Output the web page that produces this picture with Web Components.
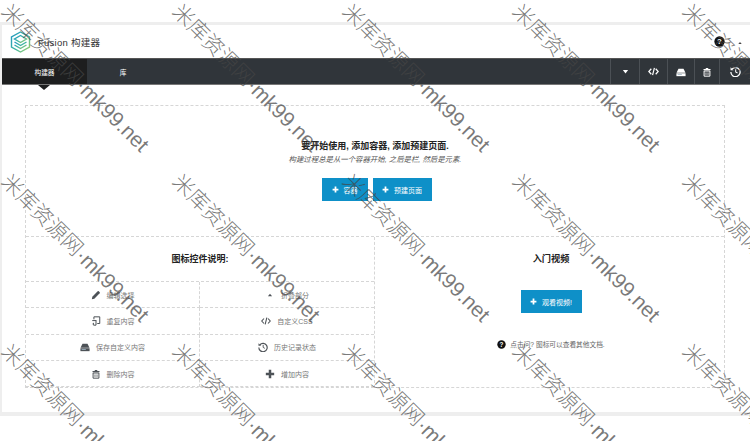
<!DOCTYPE html>
<html lang="zh"><head><meta charset="utf-8"><title>Fusion 构建器</title>
<style>
html,body{margin:0;padding:0;background:#fff;overflow:hidden}
body{width:750px;height:441px;position:relative;font-family:"Liberation Sans","Noto Sans CJK SC",sans-serif}
</style></head><body>
<fb-app>
  <fb-header></fb-header>
  <fb-toolbar></fb-toolbar>
  <fb-canvas>
    <fb-intro></fb-intro>
    <fb-panels>
      <fb-legend></fb-legend>
      <fb-video></fb-video>
    </fb-panels>
  </fb-canvas>
</fb-app>
<fb-watermark></fb-watermark>
<script>
const ICONS={
 plus:'<path d="M6 1v10M1 6h10" stroke="currentColor" stroke-width="3" fill="none"/>',
 pencil:'<path d="M1 11l.6-3L8 1.6a1 1 0 0 1 1.4 0l1 1a1 1 0 0 1 0 1.4L4 10.4z" fill="currentColor"/>',
 copy:'<path d="M3.5 1h7v8h-3M3.5 1v3" stroke="currentColor" stroke-width="1.2" fill="none"/><path d="M1.5 5.5h5M6 5.5v5.5H3" stroke="currentColor" stroke-width="1.2" fill="none"/><path d="M1.5 9.5l2-1.6v3.2z" fill="currentColor"/>',
 hdd:'<path d="M3 2h6l2.4 5H.6z" fill="currentColor"/><path d="M.5 7.5h11V11H.5z" fill="currentColor"/><path d="M2 9h5" stroke="#9fb4c4" stroke-width="1"/>',
 code:'<path d="M3.6 3 .9 6l2.7 3M8.4 3l2.7 3-2.7 3M7 2 5 10" stroke="currentColor" stroke-width="1.3" fill="none"/>',
 up:'<path d="M6 4.500l2.500 3H3.500z" fill="currentColor"/>',
 down:'<path d="M6 8.500 2.500 4h7z" fill="currentColor"/>',
 history:'<path d="M2.300 3.300A5 5 0 1 1 1 6.500" stroke="currentColor" stroke-width="1.400" fill="none"/><path d="M.6 1.400v3.200h3.200z" fill="currentColor"/><path d="M6.200 3.500v3l2 1.100" stroke="currentColor" stroke-width="1.100" fill="none"/>',
 trash:'<path d="M4.500 1.200h3V2.500h2.700V4H1.800V2.500h2.700z" fill="currentColor"/><path d="M2.500 4.800h7V11h-7z" stroke="currentColor" stroke-width="1.200" fill="none"/><path d="M4.500 6.500v3M6 6.500v3M7.500 6.500v3" stroke="currentColor" stroke-width=".7"/>',
 help:'<circle cx="6" cy="6" r="5.600" fill="currentColor"/><text x="6" y="9" text-anchor="middle" font-size="8.500" font-weight="700" font-family="Liberation Sans" fill="#fff">?</text>'
};
const svg=(n,s=12)=>`<svg width="${s}" height="${s}" viewBox="0 0 12 12" aria-hidden="true">${ICONS[n]}</svg>`;
const FONT='"Liberation Sans","Noto Sans CJK SC",sans-serif';
const DASH='1px dashed #d6d6d6';
function def(name,html){
  customElements.define(name,class extends HTMLElement{
    constructor(){super();const r=this.attachShadow({mode:'open'});r.innerHTML=typeof html==='function'?html(this):html;}
  });
}
def('fb-app',`<style>:host{display:block;box-sizing:border-box;margin-top:22px;height:394px;background:#fff;border:solid #eeeeee;border-width:3px 0 4px 2px;font-family:${FONT}}</style><slot></slot>`);
def('fb-header',`<style>:host{display:flex;align-items:center;height:33px;box-sizing:border-box;padding:0 4px 0 8px;color:#333}
.logo{margin-right:7px;display:block}.t{font-size:9.500px;letter-spacing:.25px;flex:1;padding-top:1px}
.h{color:#111;display:flex;margin-right:21px}.c{position:absolute;left:736px;top:39px;color:#444;display:flex}</style>
<svg class="logo" width="21" height="22" viewBox="0 0 21 22" aria-hidden="true"><defs><linearGradient id="g" x1="0" y1="0" x2="1" y2="1"><stop offset="0" stop-color="#1f97c4"/><stop offset=".55" stop-color="#3fb5a0"/><stop offset="1" stop-color="#a5d268"/></linearGradient></defs><g fill="none" stroke="url(#g)" stroke-width="1.400"><path d="M10.500 1 19.500 6v10l-9 5-9-5V6z"/><path d="M10.500 4.500 16.500 8l-6 3.500L4.500 8z"/><path d="M4.500 11l6 3.500 6-3.500M4.500 14l6 3.500 6-3.500"/></g></svg>
<span class="t">Fusion 构建器</span><span class="h">${svg('help',11)}</span><span class="c">${svg('up',8)}</span>`);
def('fb-toolbar',`<style>:host{display:flex;height:27px;background:#30353a;border-top:1px solid #555;border-bottom:1px solid #777;box-sizing:border-box;color:#fff;position:relative;font-size:6.700px}
.tab{display:flex;align-items:center;justify-content:center;height:100%;position:relative}
.a{width:85px;background:#1d1e1f}.b{width:72px}
.a::after{content:"";position:absolute;left:36px;top:100%;border:6px solid transparent;border-top:5px solid #1d1e1f;border-bottom:0;margin-top:1px}
.sp{flex:1}.i{display:flex;align-items:center;justify-content:center;border-left:1px solid #4b5055;height:100%;box-sizing:border-box}</style>
<div class="tab a">构建器</div><div class="tab b">库</div><div class="sp"></div>
<div class="i" style="width:29px">${svg('down',9)}</div><div class="i" style="width:28px">${svg('code',11)}</div><div class="i" style="width:27px">${svg('hdd',10)}</div><div class="i" style="width:25px">${svg('trash',10)}</div><div class="i" style="width:31px">${svg('history',11)}</div>`);
def('fb-canvas',`<style>:host{display:block;box-sizing:border-box;margin:20px 25px 0 23px;height:283px;border:${DASH}}</style><slot></slot>`);
def('fb-intro',`<style>:host{display:flex;flex-direction:column;align-items:center;height:130px;box-sizing:border-box;padding-top:34px;text-align:center}
h2{margin:0;font-size:9px;line-height:13px;font-weight:700;color:#222}
p{margin:1px 0 0;font-size:7.400px;line-height:11px;font-style:italic;color:#555}
.r{display:flex;gap:5px;margin:13px 0 0 3px}</style>
<h2>要开始使用, 添加容器, 添加预建页面.</h2><p>构建过程总是从一个容器开始, 之后是栏, 然后是元素.</p>
<div class="r"><fb-button w="46">容器</fb-button><fb-button w="59">预建页面</fb-button></div>`);
def('fb-button',h=>`<style>:host{display:inline-flex;align-items:center;justify-content:center;gap:5px;height:23px;width:${h.getAttribute('w')}px;background:#0e90c8;color:#fff;font-size:7px;box-sizing:border-box}</style>${svg('plus',7)}<slot></slot>`);
def('fb-panels',`<style>:host{display:grid;grid-template-columns:349px 1fr;height:151px;border-top:${DASH}}</style><slot></slot>`);
def('fb-legend',`<style>:host{display:block;border-right:${DASH}}
h3{margin:0;height:44px;line-height:44px;text-align:center;font-size:9px;color:#222;font-weight:700}
.g{display:grid;grid-template-columns:1fr 1fr;grid-auto-rows:26.300px;border-top:${DASH}}</style>
<h3>图标控件说明:</h3><div class="g">
<fb-legend-item icon="pencil" lr>编辑选择</fb-legend-item><fb-legend-item icon="up">折叠部分</fb-legend-item>
<fb-legend-item icon="copy" lr>重复内容</fb-legend-item><fb-legend-item icon="code">自定义CSS</fb-legend-item>
<fb-legend-item icon="hdd" lr>保存自定义内容</fb-legend-item><fb-legend-item icon="history">历史记录状态</fb-legend-item>
<fb-legend-item icon="trash" lr>删除内容</fb-legend-item><fb-legend-item icon="plus">增加内容</fb-legend-item></div>`);
def('fb-legend-item',h=>`<style>:host{display:flex;align-items:center;justify-content:center;gap:6px;font-size:7px;color:#777;box-sizing:border-box;border-bottom:${DASH};${h.hasAttribute('lr')?`border-right:${DASH};`:''}}
span{color:#4d5257;display:flex}</style><span>${svg(h.getAttribute('icon'),10)}</span><slot></slot>`);
def('fb-video',`<style>:host{display:flex;flex-direction:column;align-items:center;padding-left:3px}
h3{margin:1px 0 0;height:43px;line-height:43px;text-align:center;font-size:9.200px;color:#222;font-weight:700}
.b{margin-top:9px}.n{display:flex;align-items:center;gap:4px;margin-top:26px;font-size:6.700px;color:#666}.n span{color:#111;display:flex}</style>
<h3>入门视频</h3><fb-button class="b" w="61">观看视频!</fb-button>
<div class="n"><span>${svg('help',9)}</span>点击问? 图标可以查看其他文档.</div>`);
const marks=[];
for(const y of [-4,166,336])for(const x of [5,176,346,516,686])marks.push(`<span style="left:${x}px;top:${y}px">米库资源网·mk99.net</span>`);
def('fb-watermark',`<style>:host{position:absolute;inset:0;overflow:hidden;pointer-events:none;display:block}
span{position:absolute;white-space:nowrap;font:300 21px "Liberation Sans","Noto Sans CJK SC",sans-serif;color:rgba(70,70,70,.72);transform-origin:0 50%;transform:rotate(45deg);line-height:24px}</style>${marks.join('')}`);
</script>
</body></html>
